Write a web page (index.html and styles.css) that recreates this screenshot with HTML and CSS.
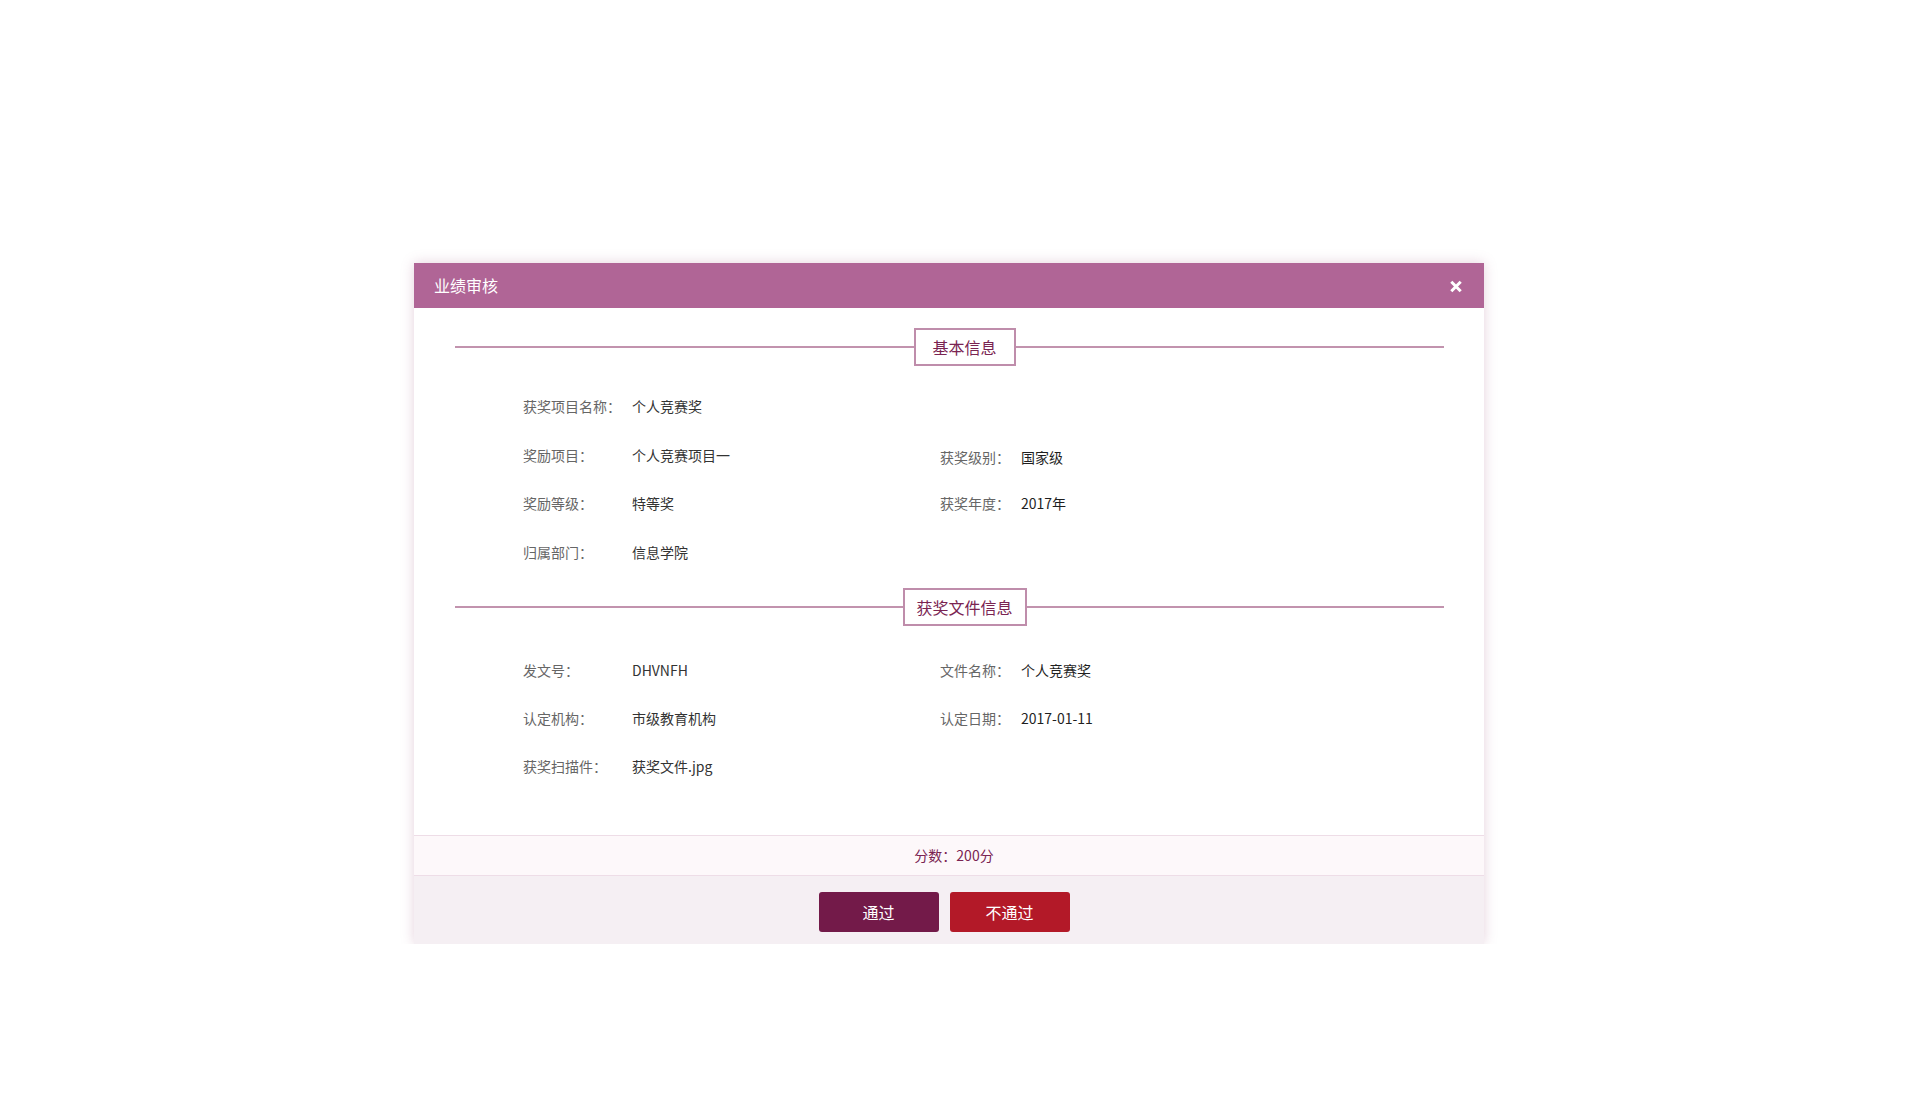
FILE: index.html
```html
<!DOCTYPE html>
<html lang="zh-CN">
<head>
<meta charset="utf-8">
<title>业绩审核</title>
<link rel="stylesheet" href="styles.css">
</head>
<body>
<div class="dialog">
  <div class="dialog-header">
    <span class="dialog-title">业绩审核</span>
    <svg class="close-icon" width="14" height="13" viewBox="0 0 14 13" aria-hidden="true">
      <path d="M2.3 1.8 L11.7 11.2 M11.7 1.8 L2.3 11.2" stroke="#ffffff" stroke-width="3" stroke-linecap="butt" fill="none"/>
    </svg>
  </div>
  <div class="dialog-body">
    <div class="section-title">
      <span class="line line-left"></span>
      <span class="section-box">基本信息</span>
      <span class="line line-right"></span>
    </div>
    <div class="info-grid grid-basic">
      <div class="row">
        <span class="label">获奖项目名称：</span><span class="value">个人竞赛奖</span>
      </div>
      <div class="row">
        <span class="label">奖励项目：</span><span class="value">个人竞赛项目一</span>
        <span class="label label-right shift">获奖级别：</span><span class="value value-right shift">国家级</span>
      </div>
      <div class="row">
        <span class="label">奖励等级：</span><span class="value">特等奖</span>
        <span class="label label-right">获奖年度：</span><span class="value value-right">2017年</span>
      </div>
      <div class="row">
        <span class="label">归属部门：</span><span class="value">信息学院</span>
      </div>
    </div>

    <div class="section-title section-second">
      <span class="line line-left"></span>
      <span class="section-box">获奖文件信息</span>
      <span class="line line-right"></span>
    </div>
    <div class="info-grid grid-file">
      <div class="row">
        <span class="label">发文号：</span><span class="value">DHVNFH</span>
        <span class="label label-right">文件名称：</span><span class="value value-right">个人竞赛奖</span>
      </div>
      <div class="row">
        <span class="label">认定机构：</span><span class="value">市级教育机构</span>
        <span class="label label-right">认定日期：</span><span class="value value-right">2017-01-11</span>
      </div>
      <div class="row">
        <span class="label">获奖扫描件：</span><span class="value">获奖文件.jpg</span>
      </div>
    </div>
  </div>
  <div class="score-strip">分数：200分</div>
  <div class="dialog-footer">
    <button class="btn btn-pass" type="button">通过</button>
    <button class="btn btn-reject" type="button">不通过</button>
  </div>
</div>
</body>
</html>
```

FILE: styles.css
```css
html, body {
  margin: 0;
  padding: 0;
  background: #ffffff;
}

body {
  padding: 263px 0 0 414px;
  font-family: "Noto Sans CJK SC", "Noto Sans", "Liberation Sans", sans-serif;
  color: #333333;
}

.dialog {
  width: 1070px;
  background: #ffffff;
  box-shadow: 0 0 12px rgba(160, 90, 130, 0.28);
}

.dialog-header {
  height: 45px;
  background: #b06596;
  display: flex;
  align-items: center;
  justify-content: space-between;
  padding: 0 21px 0 20px;
  box-sizing: border-box;
}

.dialog-title {
  color: #ffffff;
  font-size: 16px;
  line-height: 45px;
}

.close-icon {
  display: block;
  margin-top: 1px;
}

.dialog-body {
  padding: 20px 40px 45px 41px;
}

.section-title {
  display: flex;
  align-items: center;
  height: 38px;
}

.section-second {
  margin-top: 12px;
}

.line {
  height: 2px;
  background: #c293ae;
}

.line-left {
  flex: 1 1 30px;
}

.line-right {
  flex: 1 1 0;
}

.section-box {
  box-sizing: border-box;
  height: 38px;
  min-width: 102px;
  padding: 0 12px;
  border: 2px solid #bf8dab;
  color: #7a2452;
  font-size: 16px;
  line-height: 34px;
  text-align: center;
  white-space: nowrap;
}

.info-grid {
  padding-left: 68px;
}

.grid-basic {
  margin-top: 16px;
}

.grid-basic .row {
  height: 48.5px;
}

.grid-file {
  margin-top: 20px;
}

.row {
  display: grid;
  grid-template-columns: 109px 308px 81px 1fr;
  align-items: center;
  height: 48px;
  font-size: 14px;
}

.label {
  color: #666666;
  white-space: nowrap;
}

.value {
  color: #333333;
  white-space: nowrap;
}

.value-right {
  color: #1f1f1f;
}

.shift {
  position: relative;
  top: 2px;
}

.score-strip {
  box-sizing: border-box;
  height: 41px;
  border-top: 1px solid #eedde7;
  border-bottom: 1px solid #eedde7;
  background: #fdf8fa;
  color: #7a2452;
  font-size: 14px;
  line-height: 39px;
  text-align: center;
  padding-left: 10px;
}

.dialog-footer {
  height: 68px;
  box-sizing: border-box;
  padding: 16px 10px 12px 0;
  background: #f5eff3;
  display: flex;
  justify-content: center;
  gap: 11px;
}

.btn {
  width: 120px;
  height: 40px;
  border: none;
  border-radius: 3px;
  color: #ffffff;
  font-family: "Noto Sans CJK SC", "Noto Sans", sans-serif;
  font-size: 16px;
  line-height: 40px;
  padding: 0;
  cursor: pointer;
}

.btn-pass {
  background: #731a49;
}

.btn-reject {
  background: #b31928;
}
```
